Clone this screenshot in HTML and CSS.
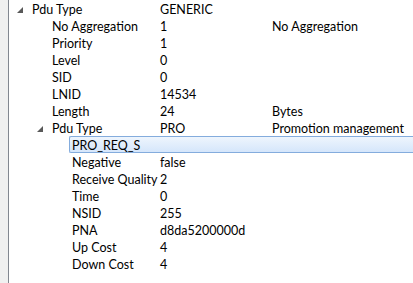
FILE: index.html
```html
<!DOCTYPE html>
<html>
<head>
<meta charset="utf-8">
<link rel="stylesheet" href="styles.css">
</head>
<body>
<div class="frame">
  <div class="gutter"></div>
  <div class="tree">
    <div class="row l1"><span class="name"><svg class="tri" width="6" height="6" viewBox="0 0 6 6"><polygon points="6,0 6,6 0,6" /></svg>Pdu Type</span><span class="val">GENERIC</span><span class="desc"></span></div>
    <div class="row l2"><span class="name">No Aggregation</span><span class="val">1</span><span class="desc">No Aggregation</span></div>
    <div class="row l2"><span class="name">Priority</span><span class="val">1</span><span class="desc"></span></div>
    <div class="row l2"><span class="name">Level</span><span class="val">0</span><span class="desc"></span></div>
    <div class="row l2"><span class="name">SID</span><span class="val">0</span><span class="desc"></span></div>
    <div class="row l2"><span class="name">LNID</span><span class="val">14534</span><span class="desc"></span></div>
    <div class="row l2"><span class="name">Length</span><span class="val">24</span><span class="desc">Bytes</span></div>
    <div class="row l2"><span class="name"><svg class="tri" width="6" height="6" viewBox="0 0 6 6"><polygon points="6,0 6,6 0,6" /></svg>Pdu Type</span><span class="val">PRO</span><span class="desc">Promotion management</span></div>
    <div class="selrow"><div class="sel">PRO_REQ_S</div></div>
    <div class="row l3"><span class="name">Negative</span><span class="val">false</span><span class="desc"></span></div>
    <div class="row l3"><span class="name">Receive Quality</span><span class="val">2</span><span class="desc"></span></div>
    <div class="row l3"><span class="name">Time</span><span class="val">0</span><span class="desc"></span></div>
    <div class="row l3"><span class="name">NSID</span><span class="val">255</span><span class="desc"></span></div>
    <div class="row l3"><span class="name">PNA</span><span class="val">d8da5200000d</span><span class="desc"></span></div>
    <div class="row l3"><span class="name">Up Cost</span><span class="val">4</span><span class="desc"></span></div>
    <div class="row l3"><span class="name">Down Cost</span><span class="val">4</span><span class="desc"></span></div>
  </div>
</div>
</body>
</html>
```
FILE: styles.css
```css
html, body {
  margin: 0;
  padding: 0;
  background: #ffffff;
}
body {
  font-family: Lato, "Noto Sans", sans-serif;
  font-size: 12.5px;
  color: #000000;
  width: 413px;
  height: 283px;
  overflow: hidden;
}
.frame {
  display: flex;
  height: 283px;
}
.gutter {
  width: 8px;
  flex: none;
  background: #f0f0f0;
  border-right: 1px solid #828790;
}
.tree {
  flex: 1;
  min-width: 0;
}
.row {
  display: grid;
  grid-template-columns: 151px 112px 1fr;
  height: 17px;
  line-height: 19px;
  white-space: nowrap;
}
.name {
  position: relative;
}
.l1 .name { padding-left: 23px; }
.l2 .name { padding-left: 43px; }
.l3 .name { padding-left: 63px; }
.tri {
  position: absolute;
  top: 7px;
  fill: #595959;
}
.l1 .tri { left: 8px; }
.l2 .tri { left: 28px; }
.selrow {
  display: flex;
  height: 17px;
  padding-left: 60px;
}
.sel {
  flex: 1;
  box-sizing: border-box;
  height: 17px;
  line-height: 17px;
  padding-left: 2px;
  border: 1px solid #84acdd;
  border-right: none;
  border-radius: 2px 0 0 2px;
  background: linear-gradient(#eef5fd, #d5e6fb);
  white-space: nowrap;
}
```
